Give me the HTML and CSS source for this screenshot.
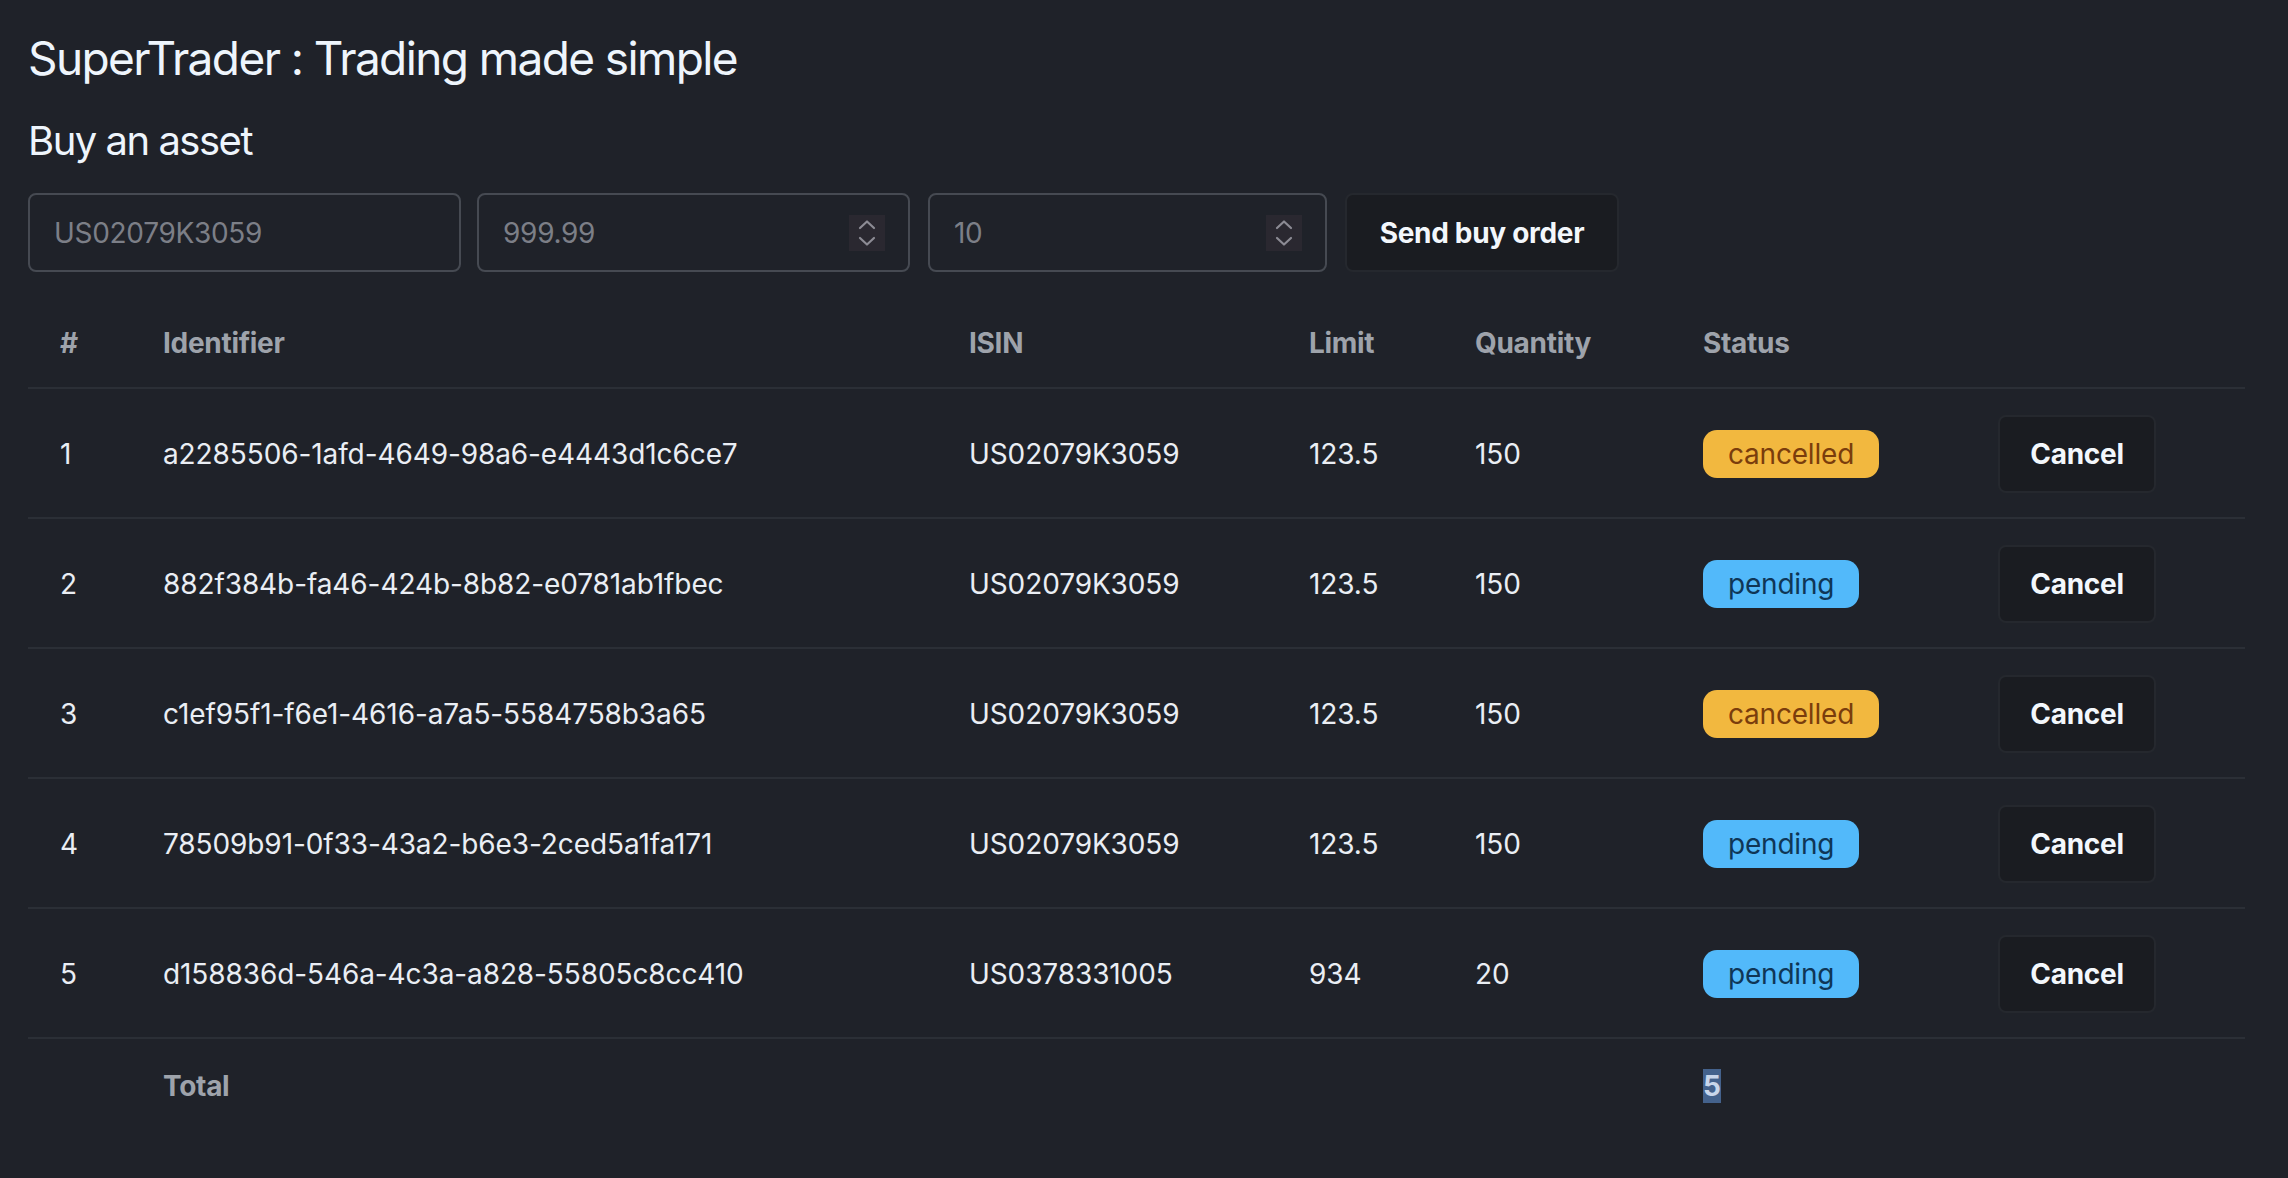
FILE: index.html
```html
<!DOCTYPE html>
<html lang="en">
<head>
<meta charset="utf-8">
<title>SuperTrader</title>
<link rel="stylesheet" href="styles.css">
</head>
<body>
<main class="page">
  <h1 class="title">SuperTrader : Trading made simple</h1>
  <h2 class="subtitle">Buy an asset</h2>
  <form class="order-form">
    <label class="field field-isin"><input class="field-input" type="text" placeholder="US02079K3059"></label>
    <label class="field field-limit"><input class="field-input" type="text" placeholder="999.99">
      <span class="spin"><svg width="36" height="36" viewBox="0 0 36 36"><polyline points="11,13 18,6.5 25,13" fill="none" stroke="#8c8b94" stroke-width="2.2" stroke-linecap="round" stroke-linejoin="round"/><polyline points="11,23 18,29.5 25,23" fill="none" stroke="#8c8b94" stroke-width="2.2" stroke-linecap="round" stroke-linejoin="round"/></svg></span>
    </label>
    <label class="field field-qty"><input class="field-input" type="text" placeholder="10">
      <span class="spin"><svg width="36" height="36" viewBox="0 0 36 36"><polyline points="11,13 18,6.5 25,13" fill="none" stroke="#8c8b94" stroke-width="2.2" stroke-linecap="round" stroke-linejoin="round"/><polyline points="11,23 18,29.5 25,23" fill="none" stroke="#8c8b94" stroke-width="2.2" stroke-linecap="round" stroke-linejoin="round"/></svg></span>
    </label>
    <button class="btn btn-send" type="button">Send buy order</button>
  </form>
  <table class="orders">
    <colgroup>
      <col class="c-num"><col class="c-id"><col class="c-isin"><col class="c-limit"><col class="c-qty"><col class="c-status"><col class="c-action">
    </colgroup>
    <thead>
      <tr><th>#</th><th>Identifier</th><th>ISIN</th><th>Limit</th><th>Quantity</th><th>Status</th><th></th></tr>
    </thead>
    <tbody>
      <tr><td>1</td><td>a2285506-1afd-4649-98a6-e4443d1c6ce7</td><td>US02079K3059</td><td>123.5</td><td>150</td><td><span class="badge badge-cancelled">cancelled</span></td><td><button class="btn btn-cancel" type="button">Cancel</button></td></tr>
      <tr><td>2</td><td>882f384b-fa46-424b-8b82-e0781ab1fbec</td><td>US02079K3059</td><td>123.5</td><td>150</td><td><span class="badge badge-pending">pending</span></td><td><button class="btn btn-cancel" type="button">Cancel</button></td></tr>
      <tr><td>3</td><td>c1ef95f1-f6e1-4616-a7a5-5584758b3a65</td><td>US02079K3059</td><td>123.5</td><td>150</td><td><span class="badge badge-cancelled">cancelled</span></td><td><button class="btn btn-cancel" type="button">Cancel</button></td></tr>
      <tr><td>4</td><td>78509b91-0f33-43a2-b6e3-2ced5a1fa171</td><td>US02079K3059</td><td>123.5</td><td>150</td><td><span class="badge badge-pending">pending</span></td><td><button class="btn btn-cancel" type="button">Cancel</button></td></tr>
      <tr><td>5</td><td>d158836d-546a-4c3a-a828-55805c8cc410</td><td>US0378331005</td><td>934</td><td>20</td><td><span class="badge badge-pending">pending</span></td><td><button class="btn btn-cancel" type="button">Cancel</button></td></tr>
    </tbody>
    <tfoot>
      <tr><td></td><td class="total-label">Total</td><td></td><td></td><td></td><td><span class="total-value">5</span></td><td></td></tr>
    </tfoot>
  </table>
</main>
</body>
</html>
```

FILE: styles.css
```css
html, body {
  margin: 0;
  padding: 0;
  background: #1f2229;
}
body {
  font-family: Inter, "Liberation Sans", sans-serif;
  color: #eaeef4;
  font-size: 28px;
}
.page {
  padding: 29px 43px 40px 28px;
}
.title {
  margin: 0;
  font-size: 46px;
  line-height: 58px;
  font-weight: 400;
  color: #eef5fc;
  letter-spacing: -1.6px;
}
.subtitle {
  margin: 30px 0 0;
  font-size: 40px;
  line-height: 48px;
  font-weight: 400;
  color: #eef5fc;
  letter-spacing: -1.5px;
}
.order-form {
  display: flex;
  align-items: center;
  gap: 16px;
  margin: 28px 0 0;
}
.field {
  display: flex;
  align-items: center;
  box-sizing: border-box;
  height: 79px;
  border: 2px solid #464a52;
  border-radius: 8px;
  padding: 0 23px 0 24px;
  background: #1f2229;
}
.field-isin { width: 433px; }
.field-limit { width: 433px; }
.field-qty { width: 399px; margin-left: 2px; }
.field-input {
  flex: 1;
  min-width: 0;
  border: none;
  outline: none;
  background: transparent;
  font-family: inherit;
  font-size: 28px;
  color: #eaeef4;
  padding: 0;
  letter-spacing: -0.3px;
}
.field-input::placeholder {
  color: #7c7f87;
}
.spin {
  display: flex;
  width: 36px;
  height: 36px;
  background: #2a2830;
}
.btn {
  box-sizing: border-box;
  background: #1a1c21;
  border: 2px solid #25282e;
  border-radius: 8px;
  color: #f3f7fc;
  font-family: inherit;
  font-weight: 700;
  font-size: 28px;
  letter-spacing: -0.3px;
  padding: 0;
  cursor: pointer;
}
.btn-send {
  width: 274px;
  height: 79px;
  margin-left: 2px;
}
.btn-cancel {
  width: 158px;
  height: 78px;
}
.orders {
  margin-top: 27px;
  width: 2217px;
  table-layout: fixed;
  border-collapse: collapse;
}
.c-num { width: 103px; }
.c-id { width: 806px; }
.c-isin { width: 340px; }
.c-limit { width: 166px; }
.c-qty { width: 228px; }
.c-status { width: 295px; }
.c-action { width: 279px; }
.orders th {
  text-align: left;
  font-weight: 700;
  color: #9ea3ab;
  height: 88px;
  padding: 0 32px;
  line-height: 40px;
  border-bottom: 2px solid #2b2f36;
  letter-spacing: -0.3px;
}
.orders td {
  padding: 2px 32px 0;
  height: 126px;
  line-height: 40px;
  border-bottom: 2px solid #2b2f36;
  color: #eaeef4;
  white-space: nowrap;
  letter-spacing: -0.1px;
}
.orders tfoot td {
  border-bottom: none;
  height: 90px;
}
.orders .total-label {
  font-weight: 700;
  color: #9ea3ab;
  letter-spacing: -0.3px;
}
.total-value {
  display: inline-block;
  background: #44628c;
  color: #c9d6ea;
  font-weight: 700;
  line-height: 34px;
}
.badge {
  display: inline-block;
  height: 48px;
  line-height: 48px;
  padding: 0 25px;
  border-radius: 14px;
  font-size: 28px;
  letter-spacing: -0.2px;
}
.badge-cancelled {
  background: #f2b83f;
  color: #7a3d0c;
}
.badge-pending {
  background: #52b9fa;
  color: #0f3656;
}
```
